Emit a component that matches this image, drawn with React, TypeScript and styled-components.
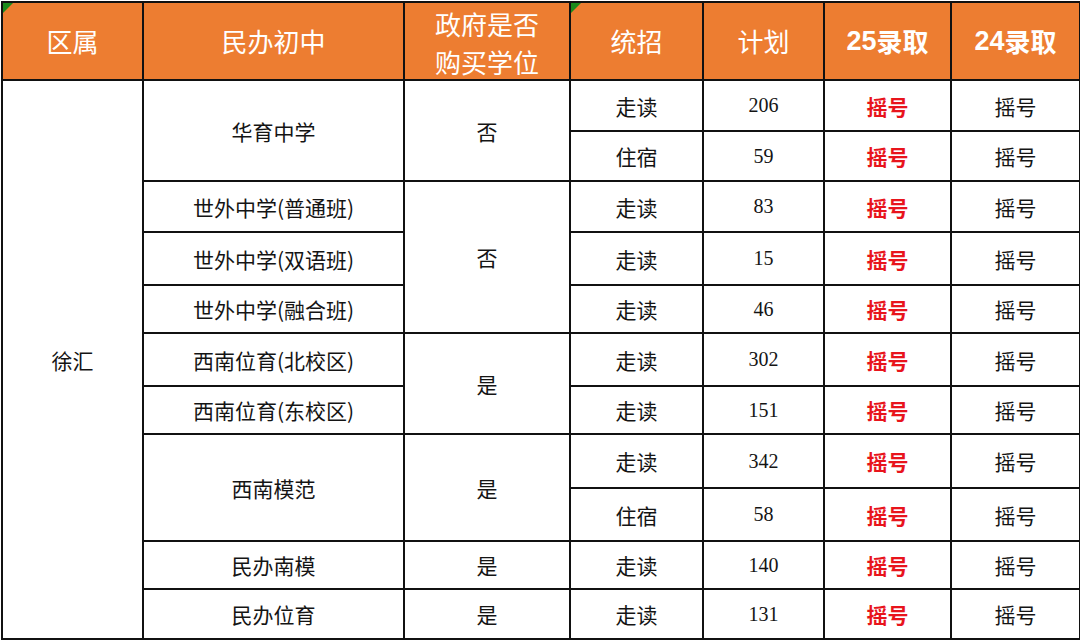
import React from 'react';
import styled, { createGlobalStyle } from 'styled-components';

const GlobalStyle = createGlobalStyle`
  html, body {
    margin: 0;
    padding: 0;
    background: #ffffff;
  }
`;

const Wrap = styled.div`
  padding: 1px 0 0 1px;
  width: 1080px;
  height: 641px;
  box-sizing: border-box;
  overflow: hidden;
`;

const Table = styled.table`
  border-collapse: collapse;
  table-layout: fixed;
  width: 1078px;
  font-family: 'Liberation Serif', 'Noto Sans CJK SC', serif;
  color: #111;
`;

const HeadCell = styled.th<{ $flag?: boolean }>`
  position: relative;
  height: 76px;
  padding: 0;
  background: #ed7d31;
  color: #fff;
  border: 2px solid #111;
  font-family: 'Noto Sans CJK SC', sans-serif;
  font-weight: 400;
  font-size: 26px;
  line-height: 40px;
  text-align: center;
  vertical-align: middle;

  ${({ $flag }) =>
    $flag &&
    `
    &::before {
      content: '';
      position: absolute;
      left: 0;
      top: 0;
      border-top: 10px solid #1b8a1b;
      border-right: 10px solid transparent;
    }
  `}
`;

const HeadInner = styled.div`
  height: 76px;
  display: flex;
  align-items: center;
  justify-content: center;
`;

const Stack = styled.div`
  line-height: 38px;
  padding-top: 2px;
  height: 74px;
`;

const Year = styled.span`
  font-family: 'Liberation Sans', 'Noto Sans CJK SC', sans-serif;
  font-weight: 700;
  font-size: 27px;
`;

const YearCn = styled.span`
  font-weight: 700;
`;

const Cell = styled.td<{ $red?: boolean; $num?: boolean }>`
  padding: 0;
  border: 2px solid #111;
  text-align: center;
  vertical-align: middle;
  font-family: ${({ $num }) =>
    $num ? "'Liberation Serif', serif" : "'Noto Sans CJK SC', sans-serif"};
  font-size: ${({ $num }) => ($num ? '20px' : '21px')};
  font-weight: ${({ $red }) => ($red ? 700 : 400)};
  color: ${({ $red }) => ($red ? '#e8141c' : '#141414')};
`;

const Row = styled.tr<{ $h: number }>`
  height: ${({ $h }) => $h}px;
`;

type Line = {
  h: number;
  district?: { text: string; span: number };
  school?: { text: string; span: number };
  gov?: { text: string; span: number };
  mode: string;
  plan: string;
};

const lines: Line[] = [
  { h: 51, district: { text: '徐汇', span: 11 }, school: { text: '华育中学', span: 2 }, gov: { text: '否', span: 2 }, mode: '走读', plan: '206' },
  { h: 50, mode: '住宿', plan: '59' },
  { h: 51, school: { text: '世外中学(普通班)', span: 1 }, gov: { text: '否', span: 3 }, mode: '走读', plan: '83' },
  { h: 53, school: { text: '世外中学(双语班)', span: 1 }, mode: '走读', plan: '15' },
  { h: 48, school: { text: '世外中学(融合班)', span: 1 }, mode: '走读', plan: '46' },
  { h: 53, school: { text: '西南位育(北校区)', span: 1 }, gov: { text: '是', span: 2 }, mode: '走读', plan: '302' },
  { h: 48, school: { text: '西南位育(东校区)', span: 1 }, mode: '走读', plan: '151' },
  { h: 54, school: { text: '西南模范', span: 2 }, gov: { text: '是', span: 2 }, mode: '走读', plan: '342' },
  { h: 53, mode: '住宿', plan: '58' },
  { h: 48, school: { text: '民办南模', span: 1 }, gov: { text: '是', span: 1 }, mode: '走读', plan: '140' },
  { h: 50, school: { text: '民办位育', span: 1 }, gov: { text: '是', span: 1 }, mode: '走读', plan: '131' },
];

const widths = [141, 261, 166, 133, 121, 127, 129];

const App: React.FC = () => {
  return (
    <Wrap>
      <GlobalStyle />
      <Table>
        <colgroup>
          {widths.map((w, i) => (
            <col key={i} style={{ width: w }} />
          ))}
        </colgroup>
        <thead>
          <tr>
            <HeadCell $flag><HeadInner>区属</HeadInner></HeadCell>
            <HeadCell><HeadInner>民办初中</HeadInner></HeadCell>
            <HeadCell>
              <HeadInner>
                <Stack>政府是否<br />购买学位</Stack>
              </HeadInner>
            </HeadCell>
            <HeadCell $flag><HeadInner>统招</HeadInner></HeadCell>
            <HeadCell><HeadInner>计划</HeadInner></HeadCell>
            <HeadCell>
              <HeadInner><Year>25</Year><YearCn>录取</YearCn></HeadInner>
            </HeadCell>
            <HeadCell>
              <HeadInner><Year>24</Year><YearCn>录取</YearCn></HeadInner>
            </HeadCell>
          </tr>
        </thead>
        <tbody>
          {lines.map((l, i) => (
            <Row key={i} $h={l.h}>
              {l.district && <Cell rowSpan={l.district.span}>{l.district.text}</Cell>}
              {l.school && <Cell rowSpan={l.school.span}>{l.school.text}</Cell>}
              {l.gov && <Cell rowSpan={l.gov.span}>{l.gov.text}</Cell>}
              <Cell>{l.mode}</Cell>
              <Cell $num>{l.plan}</Cell>
              <Cell $red>摇号</Cell>
              <Cell>摇号</Cell>
            </Row>
          ))}
        </tbody>
      </Table>
    </Wrap>
  );
};

export default App;
